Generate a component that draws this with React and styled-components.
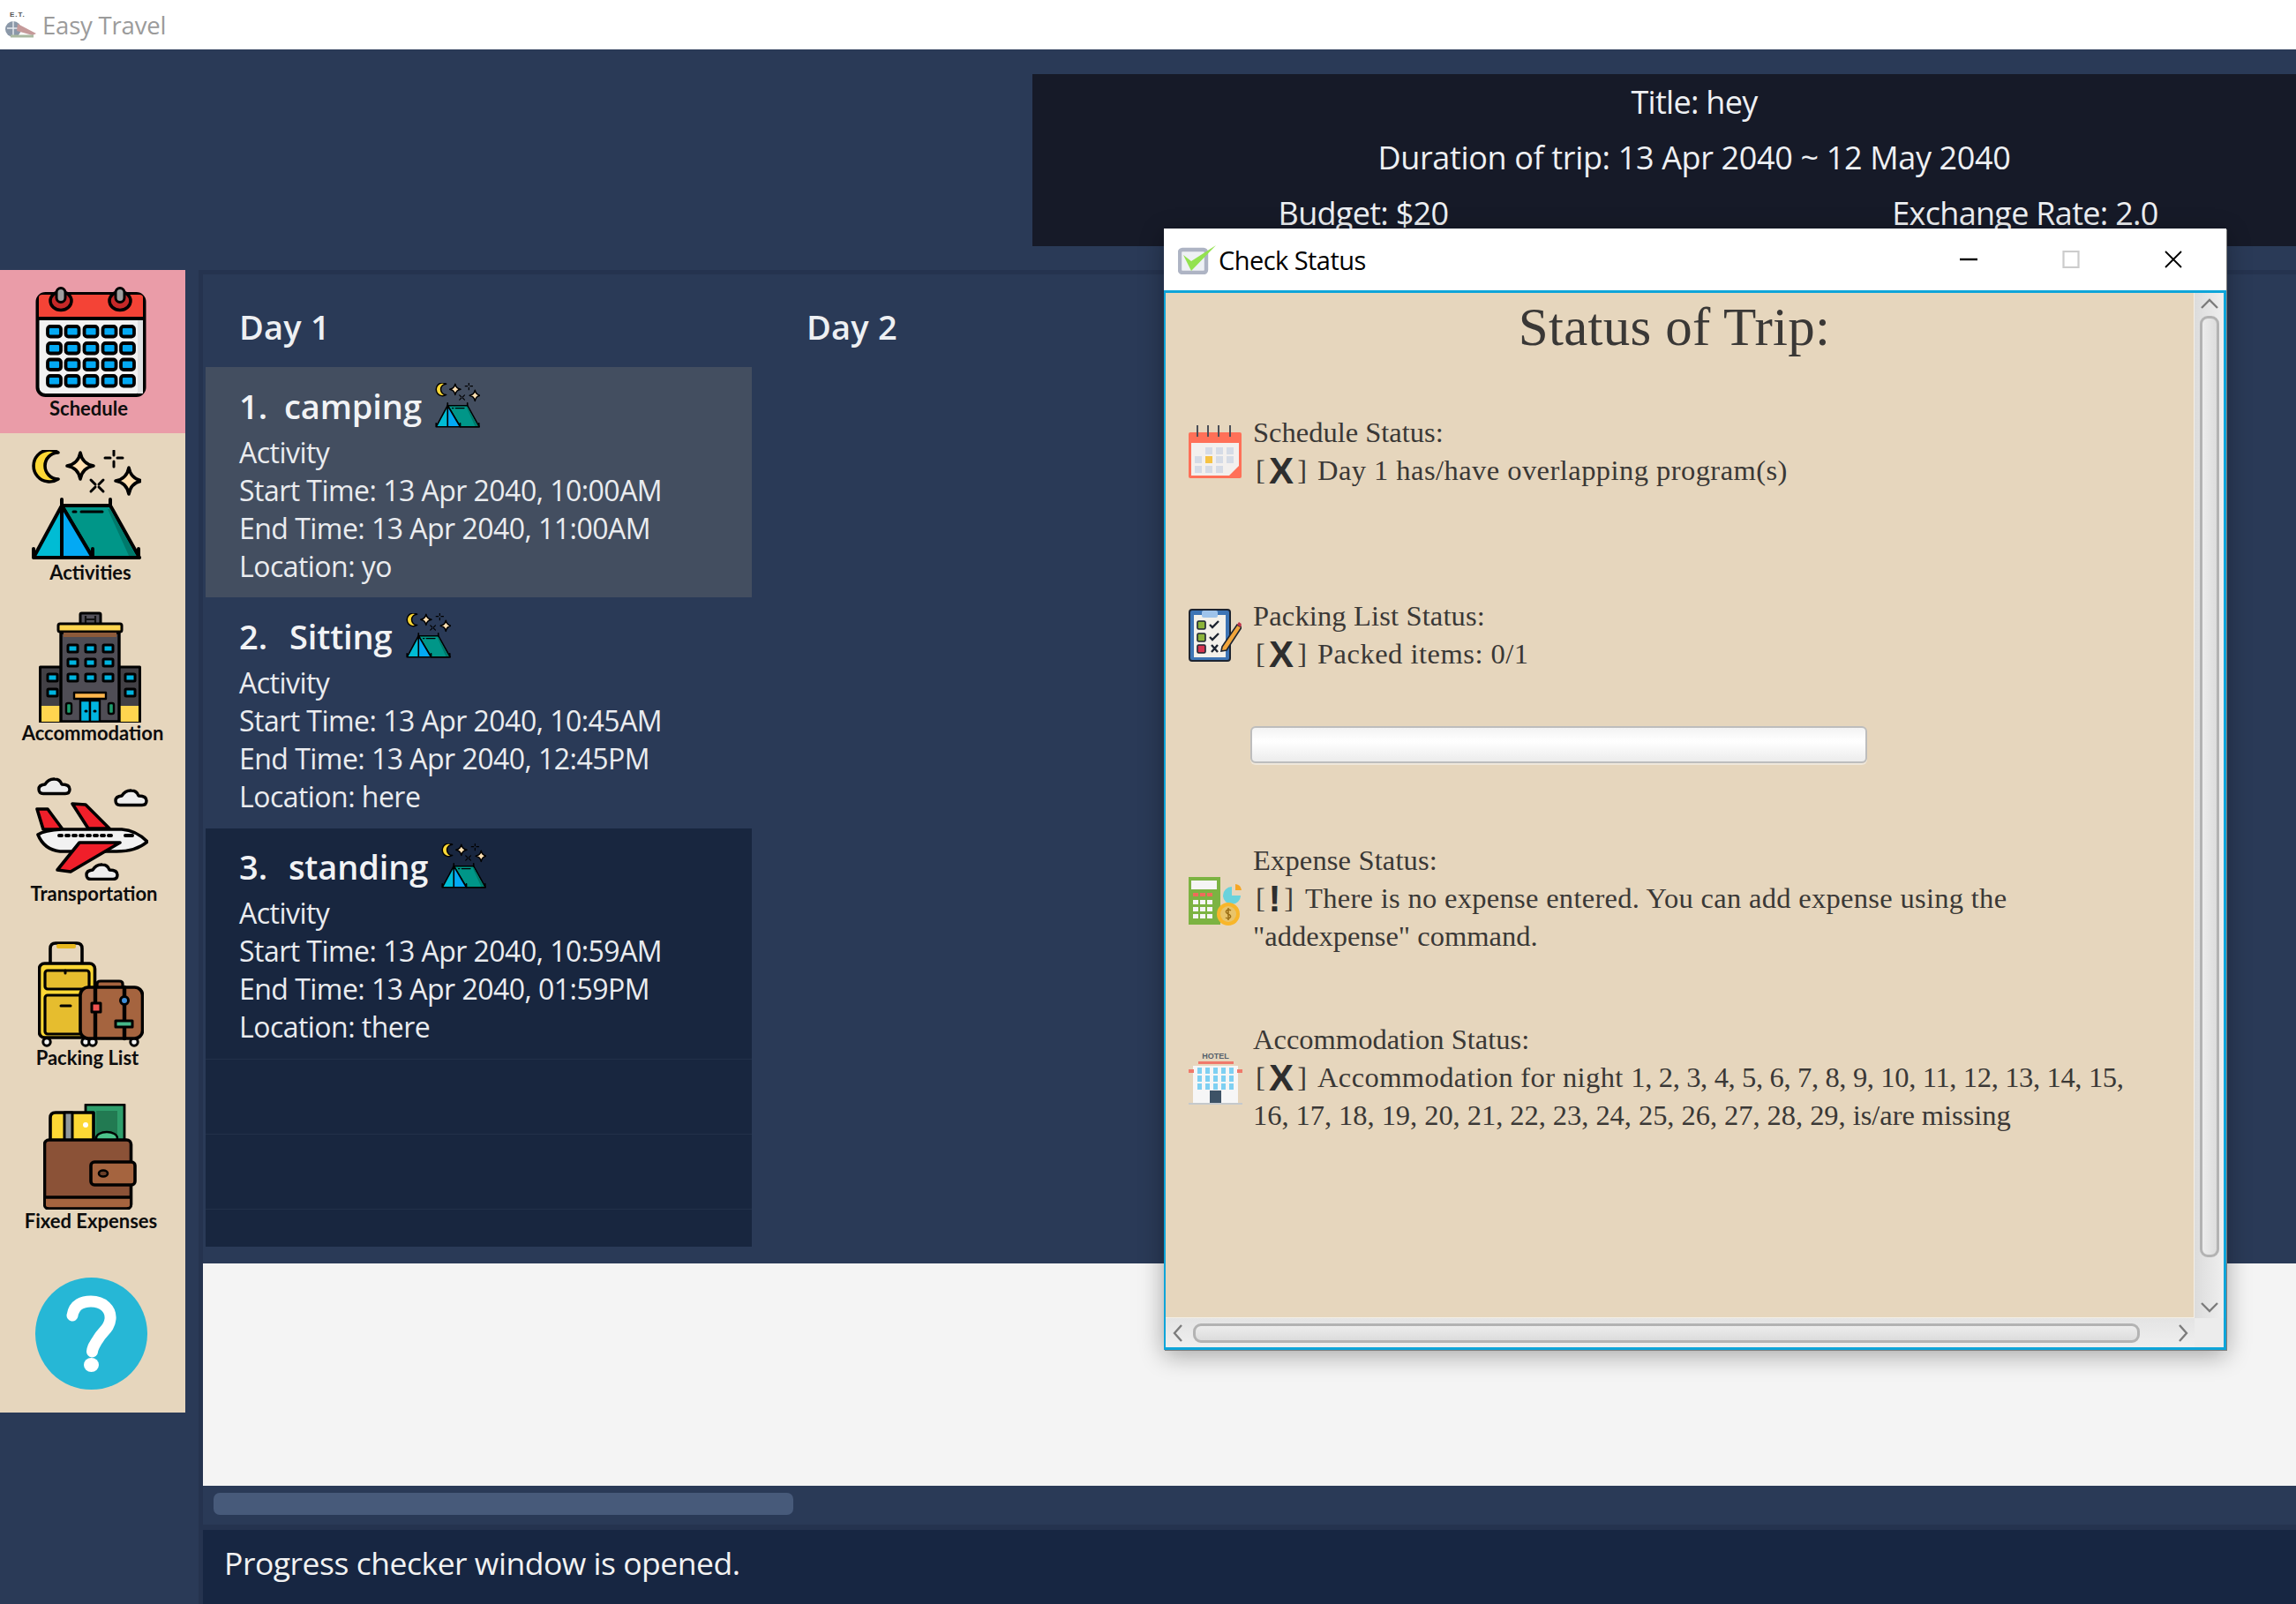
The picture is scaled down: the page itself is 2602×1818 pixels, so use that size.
import React from 'react';
import styled, { createGlobalStyle } from 'styled-components';

const Global = createGlobalStyle`
  html, body { margin: 0; padding: 0; background: #2a3a57; }
  * { box-sizing: border-box; }
`;
const UI = `"Open Sans", "Noto Sans", sans-serif`;
const LINE = '#25334f';

const Root = styled.div`
  position: relative; width: 2602px; height: 1818px; overflow: hidden;
  background: #2a3a57; display: flex; flex-direction: column; font-family: ${UI};
`;
const TitleBar = styled.header`
  height: 56px; background: #fff; display: flex; align-items: center; gap: 6px; padding: 0 0 0 4px;
  color: #9b9b9b; font-size: 27.5px; letter-spacing: -0.2px;
`;
const Body = styled.div`display: flex; flex: 1; min-height: 0;`;
const Sidebar = styled.nav`
  width: 210px; flex: none; padding-top: 250px; display: flex; flex-direction: column;
  align-self: flex-start;
`;
const NavItem = styled.div`
  height: 185px; display: flex; flex-direction: column; align-items: center;
  background: ${p => (p.$active ? '#ea9ca8' : '#e6d6bd')};
  padding-top: ${p => p.$top}px; padding-right: ${p => p.$right || 0}px;
`;
const NavLabel = styled.span`
  font-family: Lato, sans-serif; font-weight: 700; font-size: 22px; line-height: 24px; color: #0d0d0d;
  margin-top: ${p => p.$gap}px; margin-left: ${p => p.$shift || 0}px; white-space: nowrap;
`;
const Main = styled.main`flex: 1; min-width: 0; display: flex; flex-direction: column;`;
const HeaderZone = styled.div`height: 250px; padding: 28px 0 0 960px;`;
const TripPanel = styled.section`
  height: 195px; background: #161a28; overflow: hidden; color: #eef0f3; font-size: 36px;
`;
const TripInner = styled.div`width: 1500px;`;
const TripLine = styled.div`
  height: 63px; line-height: 63px; text-align: center; letter-spacing: ${p => p.$ls || -0.7}px;
`;
const TripPair = styled.div`display: grid; grid-template-columns: 750px 750px;`;
const Lower = styled.div`
  flex: 1; min-height: 0; margin-left: 15px; display: flex; flex-direction: column;
  border-left: 5px solid ${LINE};
`;
const Schedule = styled.section`
  height: 1126px; border-top: 5px solid ${LINE}; padding-left: 3px; display: flex; gap: 24px;
`;
const DayCol = styled.div`width: 619px; flex: none; display: flex; flex-direction: column;`;
const DayTitle = styled.h2`
  margin: 0; height: 105px; padding: 38px 0 0 38px; font-size: 38px; line-height: 42px; font-weight: 600; color: #eef0f3;
  letter-spacing: 0.2px;
`;
const Card = styled.article`
  height: ${p => p.$h}px; padding: ${p => p.$pad}px 0 0 38px; color: #eaecef;
  background: ${p => (p.$sel ? '#434e60' : p.$dark ? '#18263f' : 'transparent')};
`;
const CardHead = styled.div`
  height: 51px; display: flex; align-items: center; font-size: 38px; font-weight: 600; color: #f2f3f5; letter-spacing: -0.1px;
`;
const CardNum = styled.span`margin-right: ${p => p.$gap}px;`;
const CardName = styled.span`margin-right: 15px;`;
const CardLines = styled.div`margin-top: 6px; font-size: 32px; line-height: 43px; letter-spacing: -0.53px; white-space: nowrap;`;
const EmptyRow = styled.div`
  height: ${p => p.$h}px; background: #18263f; border-top: 1px solid #223049;
`;
const CommandZone = styled.div`height: 252px; background: #f4f4f4;`;
const ScrollZone = styled.div`height: 44px; padding: 8px 0 0 12px;`;
const HThumb = styled.div`width: 657px; height: 25px; border-radius: 7px; background: #475a7a;`;
const StatusBar = styled.footer`
  flex: 1; border-top: 6px solid ${LINE}; background: #172642; color: #f2f2f2; padding: 13px 0 0 24px;
  font-size: 35.5px; line-height: 48px; letter-spacing: -0.48px;
`;

/* Floating window */
const Win = styled.aside`
  position: absolute; left: 1319px; top: 259px; width: 1204px; height: 1271px;
  display: flex; flex-direction: column; background: #fff;
  box-shadow: 1px 1px 0 #7d7d7d, 0 6px 26px rgba(0,0,0,.33);
`;
const WinBar = styled.div`
  height: 70px; flex: none; display: flex; align-items: center; padding: 0 50px 0 16px; color: #000;
  font-size: 29px; letter-spacing: -0.55px;
`;
const WinTitle = styled.span`margin-left: 3px; flex: 1;`;
const WinControls = styled.div`display: flex; align-items: center; gap: 96px;`;
const Frame = styled.div`
  flex: 1; min-height: 0; border: solid #0ea5d9; border-width: 3px 3px 3px 2px;
  display: grid; grid-template-columns: 1fr 33px; grid-template-rows: 1fr 33px; background: #ececec;
`;
const Content = styled.div`
  background: #e6d6bd; padding: 9px 0 0 26px; display: flex; flex-direction: column; color: #3a3836;
  font-family: "Liberation Serif", serif; font-size: 32.5px; line-height: 43px;
  border-right: 1px solid #f4efe6; border-bottom: 1px solid #f4efe6; overflow: hidden;
`;
const StatusTitle = styled.h1`
  margin: 0; height: 60px; padding-right: 38px; text-align: center; font-weight: 400; font-size: 61px; line-height: 60px; color: #3a3836;
  letter-spacing: 0.3px;
`;
const Row = styled.div`
  display: grid; grid-template-columns: 60px 1fr; column-gap: 13px; align-items: center; margin-top: ${p => p.$mt}px; flex: none;
`;
const RowText = styled.div`white-space: nowrap;`;
const Spaced = styled.span`letter-spacing: ${p => p.$ls}px;`;
const Mark = styled.span`
  display: inline-flex; align-items: center; width: ${p => p.$w}px; margin: 0 ${p => p.$after}px 0 3px; justify-content: space-between;
  vertical-align: baseline;
`;
const MarkGlyph = styled.b`
  font-family: "Liberation Sans", sans-serif; font-weight: 700; font-size: 42px; line-height: 30px; color: #2e2e2e;
`;
const Progress = styled.div`
  width: 699px; height: 42px; margin: 60px 0 0 70px; flex: none; border: 2px solid #bdbdbd; border-radius: 6px;
  background: linear-gradient(#f3f3f3, #fff 40%, #ececec); box-shadow: 0 2px 0 #efe7db;
`;
const VTrack = styled.div`
  background: linear-gradient(90deg, #dcdcdc, #efefef); display: flex; flex-direction: column; align-items: center;
`;
const HTrack = styled.div`
  background: linear-gradient(#e4e4e4, #efefef); display: flex; align-items: center; padding-left: 34px;
`;
const Corner = styled.div`background: #ececec;`;
const VThumb = styled.div`
  width: 22px; height: 1067px; flex: none; border: 3px solid #b3b3b3; border-radius: 9px;
  background: linear-gradient(90deg, #ededed, #dcdcdc);
`;
const HBar = styled.div`
  width: 1073px; height: 22px; flex: none; border: 3px solid #b3b3b3; border-radius: 9px;
  background: linear-gradient(#ededed, #dcdcdc);
`;
const ArrowV = styled.svg`flex: none; display: block; margin: ${p => p.$m};`;
const ArrowH = styled.svg`flex: none; display: block; margin: ${p => p.$m};`;
const Ico = styled.svg`display: block; flex: none;`;

const S = { stroke: '#000', strokeLinejoin: 'round', strokeLinecap: 'round' };

const Star = ({ x, y, r }) => (
  <path d={`M${x} ${y - r}Q${x + r * .15} ${y - r * .15} ${x + r} ${y}Q${x + r * .15} ${y + r * .15} ${x} ${y + r}Q${x - r * .15} ${y + r * .15} ${x - r} ${y}Q${x - r * .15} ${y - r * .15} ${x} ${y - r}Z`} fill="#ffe0b2" {...S} strokeWidth="3.6" />
);

const TentIcon = ({ size = 125 }) => (
  <Ico width={size} height={size} viewBox="0 0 125 125">
    <path d="M31 3A18 18 0 1 0 31 33A14 14 0 0 1 31 3Z" fill="#fdd835" {...S} strokeWidth="3.6" />
    <Star x={56} y={18} r={15} />
    <Star x={111} y={35} r={15} />
    <g {...S} strokeWidth="3" fill="none">
      <path d="M94 1v5M94 13v6M84 9h6M98 9h6" />
      <path d="M68 34l5 5M82 34l-5 5M68 47l5-5M82 47l-5-5" />
    </g>
    <path d="M35 63H90L123 122H70Z" fill="#009688" {...S} strokeWidth="4" />
    <path d="M112 122L87 67h3l30 55Z" fill="#00796b" />
    <path d="M35 63L3 122H35Z" fill="#00bcd4" />
    <path d="M35 63L70 122H35Z" fill="#03a9f4" />
    <path d="M35 56V122M35 63L3 122H122M35 63L70 122M90 56V63M3 112V122M122 112V122M70 112V122" fill="none" {...S} strokeWidth="4" />
    <path d="M48 70h3M57 70h24" {...S} strokeWidth="3" />
  </Ico>
);

const CalendarIcon = () => {
  const xs = [13, 33.5, 54.5, 75.5, 96];
  const ys = [44, 63, 81.5, 100];
  return (
    <Ico width="126" height="125" viewBox="0 0 126 125">
      <rect x="2.5" y="8" width="121" height="115" rx="9" fill="#f2f2f2" {...S} strokeWidth="4" />
      <path d="M4 35V12q0-3 4-3H118q4 0 4 3V35Z" fill="#f44336" />
      <rect x="116" y="36" width="6" height="85" fill="#dfe1e3" />
      <path d="M3 36H123" {...S} strokeWidth="4" />
      {[29, 96].map(x => (
        <g key={x}>
          <ellipse cx={x} cy="16" rx="12" ry="10.5" fill="#c62828" {...S} strokeWidth="3.5" />
          <rect x={x - 5} y="1.5" width="10" height="16" rx="5" fill="#9e9e9e" {...S} strokeWidth="3" />
        </g>
      ))}
      {ys.map(y => xs.map(x => (
        <rect key={`${x}-${y}`} x={x + 1} y={y + 1} width="15" height="11.5" rx="3" fill="#03a9f4" {...S} strokeWidth="3.8" />
      )))}
    </Ico>
  );
};

const HotelIcon = () => {
  const win = (x, y) => <rect key={`${x}-${y}`} x={x + 1} y={y} width="11" height="8" rx="1" fill="#00b4e0" {...S} strokeWidth="3" />;
  return (
    <Ico width="116" height="126" viewBox="0 0 116 126">
      <rect x="47" y="2" width="23" height="14" rx="1.5" fill="#55525a" {...S} strokeWidth="3" />
      <path d="M53 5v8M64 5v8M53 9h11" stroke="#111" strokeWidth="2.2" fill="none" />
      <rect x="1.5" y="63" width="24" height="62" fill="#424045" {...S} strokeWidth="3" />
      <rect x="90" y="63" width="24.5" height="62" fill="#424045" {...S} strokeWidth="3" />
      <rect x="3" y="107" width="22" height="18" fill="#ffd54f" />
      <rect x="91" y="107" width="22" height="18" fill="#ffd54f" />
      <rect x="25" y="24" width="66" height="101" fill="#4f4d55" {...S} strokeWidth="3.4" />
      <rect x="22" y="14" width="72" height="9" rx="2" fill="#ffd54f" {...S} strokeWidth="3" />
      <rect x="28" y="24" width="60" height="5" fill="#8d5a3a" />
      {[32, 52, 72].flatMap(x => [38, 54, 71].map(y => win(x, y)))}
      {[9, 97].flatMap(x => [71, 88].map(y => win(x, y)))}
      <rect x="40" y="92" width="36" height="7" fill="#ffb74d" {...S} strokeWidth="2.4" />
      <rect x="47" y="101" width="11" height="24" fill="#00b4e0" {...S} strokeWidth="2.4" />
      <rect x="58" y="101" width="11" height="24" fill="#00b4e0" {...S} strokeWidth="2.4" />
      <rect x="31" y="104" width="6" height="12" rx="2" fill="#1e9e6e" {...S} strokeWidth="2.4" />
      <rect x="79" y="104" width="6" height="12" rx="2" fill="#1e9e6e" {...S} strokeWidth="2.4" />
      <path d="M53 113h1M63 113h1" {...S} strokeWidth="3" />
    </Ico>
  );
};

const Cloud = ({ x, y }) => (
  <path transform={`translate(${x} ${y})`} d="M7 18.5Q2 18.5 2 13.5Q2 8.5 9 8Q13 1.5 20 2Q26 2 28 8Q37 8 37 13.5Q37 18.5 32 18.5Z" fill="#eee" {...S} strokeWidth="3.4" />
);

const PlaneIcon = () => (
  <Ico width="128" height="117" viewBox="0 0 128 117">
    <Cloud x={2} y={0} />
    <Cloud x={89} y={13} />
    <Cloud x={56} y={97} />
    <path d="M2 36H14L31 59H9Z" fill="#f01f2a" {...S} strokeWidth="3.6" />
    <path d="M42 30L57 31L84 58H60Z" fill="#f01f2a" {...S} strokeWidth="3.6" />
    <path d="M3 65Q10 60 30 59H98Q114 60 127 73Q114 84 92 84H28Q10 82 3 65Z" fill="#f2f2f2" {...S} strokeWidth="3.6" />
    <path d="M50 74L96 74L40 107L25 105Z" fill="#f01f2a" {...S} strokeWidth="3.6" />
    <path d="M27 66h3M35 66h3M43 66h3M51 66h3M59 66h3M67 66h3M75 66h3M83 66h3M102 66h8" {...S} strokeWidth="4" />
  </Ico>
);

const LuggageIcon = () => (
  <Ico width="120" height="120" viewBox="0 0 120 120">
    <path d="M14 25V8Q14 2 20 2H44Q50 2 50 8V25" fill="none" {...S} strokeWidth="3.6" />
    <rect x="21" y="3" width="22" height="5" rx="2" fill="#e8b81e" />
    <rect x="1.5" y="25" width="63" height="84" rx="6" fill="#fdd835" {...S} strokeWidth="3.6" />
    <rect x="8" y="33" width="50" height="21" rx="3" fill="#e6bd2e" {...S} strokeWidth="3.2" />
    <rect x="8" y="61" width="50" height="44" rx="3" fill="#e6bd2e" {...S} strokeWidth="3.2" />
    <path d="M31 33v3M26 73h11" {...S} strokeWidth="3" />
    {[10, 54, 62, 109].map(x => <circle key={x} cx={x} cy="114" r="4.2" fill="#f4f4f4" {...S} strokeWidth="3" />)}
    <path d="M67 52V48Q67 45 71 45H92Q96 45 96 48V52" fill="#a5643f" {...S} strokeWidth="3.2" />
    <rect x="48" y="52" width="70.5" height="58" rx="9" fill="#a5643f" {...S} strokeWidth="3.6" />
    <path d="M65 52V110M98 52V110" {...S} strokeWidth="4.4" fill="none" />
    <rect x="61" y="70" width="10" height="10" fill="#ef5350" {...S} strokeWidth="3" />
    <circle cx="98" cy="67" r="4.5" fill="#3f8ed8" {...S} strokeWidth="3" />
    <rect x="88" y="90" width="19" height="7" fill="#46b88a" {...S} strokeWidth="3" />
  </Ico>
);

const WalletIcon = () => (
  <Ico width="106" height="120" viewBox="0 0 106 120">
    <rect x="48" y="1" width="44" height="44" fill="#2e9e6b" {...S} strokeWidth="2.8" />
    <rect x="60" y="8" width="24" height="36" fill="#227a52" />
    <ellipse cx="72" cy="39" rx="12" ry="7" fill="#4cc38a" {...S} strokeWidth="2.4" />
    <path d="M8 44V16Q8 10 14 10H57V44Z" fill="#fdd835" {...S} strokeWidth="3.6" />
    <rect x="24" y="10" width="9" height="34" fill="#8f979b" {...S} strokeWidth="3" />
    <path d="M45 24a3 3 0 0 1 6 0a3 3 0 0 1-6 0" fill="#fff" />
    <rect x="1.5" y="41" width="98" height="78" rx="5" fill="#8b5237" {...S} strokeWidth="3.6" />
    <path d="M3 107H98V115Q98 117 96 117H5Q3 117 3 115Z" fill="#a5643f" />
    <path d="M2 106H99" {...S} strokeWidth="3.4" />
    <rect x="54" y="66" width="50" height="26" rx="4" fill="#a5643f" {...S} strokeWidth="3.6" />
    <ellipse cx="68" cy="79" rx="5" ry="3.5" fill="#6b3f28" {...S} strokeWidth="2.6" />
  </Ico>
);

const HelpIcon = () => (
  <Ico width="127" height="127" viewBox="0 0 127 127">
    <circle cx="63.5" cy="63.5" r="63.5" fill="#26b7d6" />
    <path d="M42 43C44 30 54 27 63 27C77 27 86 36 85 47C84 58 76 61 71 70C67 76 65 79 64.5 84" fill="none" stroke="#fff" strokeWidth="13" strokeLinecap="round" />
    <ellipse cx="63.5" cy="99" rx="8.5" ry="8" fill="#fff" />
  </Ico>
);

const LogoIcon = () => (
  <Ico width="38" height="38" viewBox="0 0 38 38">
    <text x="7" y="10" fontFamily="Liberation Sans, sans-serif" fontSize="8" fontWeight="700" fill="#555" letterSpacing="1">E.T.</text>
    <circle cx="11" cy="24" r="9" fill="#8b98a8" />
    <path d="M4 23h14M11 15v18" stroke="#e7eaee" strokeWidth="1.4" />
    <path d="M16 18L37 29L33 31L15 26Z" fill="#c59a9a" />
    <path d="M8 32h26" stroke="#a9b8a0" strokeWidth="3" />
  </Ico>
);

const CheckIcon = () => (
  <Ico width="43" height="33" viewBox="0 0 43 33">
    <rect x="2" y="5" width="30" height="26" rx="3" fill="#eef1f5" stroke="#aeb4c4" strokeWidth="4.4" />
    <path d="M6 11L15 29L43 0L15 18Z" fill="#93e24f" />
  </Ico>
);

const MinIcon = () => <Ico width="20" height="20" viewBox="0 0 20 20"><path d="M0 10H20" stroke="#000" strokeWidth="2.4" /></Ico>;
const MaxIcon = () => <Ico width="20" height="20" viewBox="0 0 20 20"><rect x="1.5" y="1" width="17" height="18" fill="none" stroke="#ccc" strokeWidth="2.2" /></Ico>;
const CloseIcon = () => <Ico width="20" height="20" viewBox="0 0 20 20"><path d="M1 1L19 19M19 1L1 19" stroke="#000" strokeWidth="1.8" /></Ico>;

const FlatCalendar = () => (
  <Ico width="60" height="60" viewBox="0 0 60 60">
    <rect x="0" y="8" width="60" height="52" rx="2" fill="#ff7058" />
    <rect x="3" y="20" width="54" height="37" fill="#f3f0ee" />
    <path d="M57 46V57H46Z" fill="#ff7058" />
    <path d="M10 0v13M22 0v13M34 0v13M47 0v13" stroke="#4b4f58" strokeWidth="2" />
    {[[19, 25], [31, 25], [43, 25], [7, 35], [31, 35], [43, 35], [7, 46], [19, 46], [31, 46]].map(([x, y]) => (
      <rect key={`${x}-${y}`} x={x} y={y} width="8" height="8" fill="#d5dbe6" />
    ))}
    <rect x="19" y="35" width="8" height="8" fill="#f6c344" />
  </Ico>
);

const FlatClipboard = () => (
  <Ico width="60" height="60" viewBox="0 0 60 60">
    <rect x="1" y="1" width="46" height="58" rx="3" fill="#3e75b5" stroke="#1d2430" strokeWidth="2" />
    <rect x="6" y="7" width="36" height="48" fill="#f4f1ea" />
    <rect x="15" y="2" width="18" height="8" rx="2" fill="#9ec3ea" />
    {[[10, 14, '#8cb43a'], [10, 28, '#8cb43a'], [10, 41, '#d6344f']].map(([x, y, c]) => (
      <rect key={y} x={x} y={y} width="9" height="9" rx="1.5" fill={c} stroke="#1d2430" strokeWidth="1.6" />
    ))}
    <path d="M24 18l3 3l7-7M24 32l3 3l7-7" fill="none" stroke="#1d2430" strokeWidth="2.4" />
    <path d="M26 41l7 8M33 41l-7 8" stroke="#1d2430" strokeWidth="2.4" />
    <path d="M38 43L55 18L60 21L43 47L37 48Z" fill="#f0a53c" stroke="#1d2430" strokeWidth="1.6" />
    <path d="M55 18L57 15Q59 16 60 18L59 21Z" fill="#c0344a" />
  </Ico>
);

const FlatCalculator = () => (
  <Ico width="61" height="62" viewBox="0 -6 61 62">
    <rect x="0" y="0" width="36" height="54" fill="#7cb342" />
    <rect x="3" y="4" width="29" height="10" fill="#f5f5f5" />
    {[5, 13, 21].map(x => <rect key={x} x={x} y="18" width="6" height="4" fill="#ef6c5a" />)}
    {[5, 13, 21].flatMap(x => [26, 34, 42].map(y => <rect key={`${x}-${y}`} x={x} y={y} width="6" height="5" fill="#f5f5f5" />))}
    <path d="M49 11A10 10 0 1 0 59 21H49Z" fill="#69d2dc" />
    <path d="M53 8A8 8 0 0 1 60 15L53 15Z" fill="#f6a623" />
    <circle cx="45" cy="42" r="13" fill="#f8b62a" />
    <circle cx="45" cy="42" r="9" fill="#e9c46a" />
    <path d="M45 35v14M48 38q-3-2-5 0t2 4t2 4t-5 0" fill="none" stroke="#9a6d14" strokeWidth="1.5" />
  </Ico>
);

const FlatHotel = () => (
  <Ico width="61" height="60" viewBox="0 0 61 60">
    <text x="30.5" y="8" textAnchor="middle" fontFamily="Liberation Sans, sans-serif" fontSize="9" fontWeight="700" fill="#56606b">HOTEL</text>
    <rect x="11" y="11" width="40" height="3" fill="#f0796b" />
    <rect x="5" y="16" width="51" height="44" fill="#f6f6f6" />
    <path d="M0 20H6V24H0ZM55 20H61V24H55Z" fill="#f0796b" />
    {[10, 19, 28, 37, 46].flatMap(x => [18, 27, 36].map(y => <rect key={`${x}-${y}`} x={x} y={y} width="5" height="7" fill="#7ed0f2" />))}
    <rect x="24" y="44" width="13" height="16" fill="#3d5266" />
    <rect x="0" y="58" width="61" height="2" fill="#c5c9cc" />
  </Ico>
);

const Chevron = ({ d, w, h, m, as: Tag }) => (
  <Tag width={w} height={h} viewBox={`0 0 ${w} ${h}`} $m={m}>
    <path d={d} fill="none" stroke="#7c7c7c" strokeWidth="2.4" />
  </Tag>
);

const X = ({ glyph = 'X', w = 58, after = 12 }) => (
  <Mark $w={w} $after={after}><span>[</span><MarkGlyph>{glyph}</MarkGlyph><span>]</span></Mark>
);

const nav = [
  { label: 'Schedule', icon: <CalendarIcon />, top: 19, gap: 1, active: true, shift: -5, right: 4 },
  { label: 'Activities', icon: <TentIcon />, top: 19, gap: 2, shift: 11, right: 16 },
  { label: 'Accommodation', icon: <HotelIcon />, top: 17, gap: 0, shift: 6, right: 6 },
  { label: 'Transportation', icon: <PlaneIcon />, top: 20, gap: 3, shift: 6, right: 3 },
  { label: 'Packing List', icon: <LuggageIcon />, top: 21, gap: 0, shift: -8, right: 4 },
  { label: 'Fixed Expenses', icon: <WalletIcon />, top: 20, gap: 1, shift: 2, right: 6 },
];

const cards = [
  { n: '1.', gap: 19, name: 'camping', lines: ['Activity', 'Start Time: 13 Apr 2040, 10:00AM', 'End Time: 13 Apr 2040, 11:00AM', 'Location: yo'], h: 261, pad: 18, sel: true },
  { n: '2.', gap: 25, name: 'Sitting', lines: ['Activity', 'Start Time: 13 Apr 2040, 10:45AM', 'End Time: 13 Apr 2040, 12:45PM', 'Location: here'], h: 262, pad: 18 },
  { n: '3.', gap: 24, name: 'standing', lines: ['Activity', 'Start Time: 13 Apr 2040, 10:59AM', 'End Time: 13 Apr 2040, 01:59PM', 'Location: there'], h: 261, pad: 17, dark: true },
];

export default function App() {
  return (
    <Root>
      <Global />
      <TitleBar><LogoIcon />Easy Travel</TitleBar>
      <Body>
        <Sidebar>
          {nav.map(n => (
            <NavItem key={n.label} $active={n.active} $top={n.top} $right={n.right}>
              {n.icon}
              <NavLabel $gap={n.gap} $shift={n.shift}>{n.label}</NavLabel>
            </NavItem>
          ))}
          <NavItem $top={32} $right={4}><HelpIcon /></NavItem>
        </Sidebar>
        <Main>
          <HeaderZone>
            <TripPanel>
              <TripInner>
                <TripLine>Title: hey</TripLine>
                <TripLine $ls={-0.35}>Duration of trip: 13 Apr 2040 ~ 12 May 2040</TripLine>
                <TripPair>
                  <TripLine>Budget: $20</TripLine>
                  <TripLine>Exchange Rate: 2.0</TripLine>
                </TripPair>
              </TripInner>
            </TripPanel>
          </HeaderZone>
          <Lower>
            <Schedule>
              <DayCol>
                <DayTitle>Day 1</DayTitle>
                {cards.map(c => (
                  <Card key={c.n} $h={c.h} $pad={c.pad} $sel={c.sel} $dark={c.dark}>
                    <CardHead>
                      <CardNum $gap={c.gap}>{c.n}</CardNum>
                      <CardName>{c.name}</CardName>
                      <TentIcon size={51} />
                    </CardHead>
                    <CardLines>{c.lines.map(l => <div key={l}>{l}</div>)}</CardLines>
                  </Card>
                ))}
                <EmptyRow $h={85} />
                <EmptyRow $h={85} />
                <EmptyRow $h={43} />
              </DayCol>
              <DayCol><DayTitle>Day 2</DayTitle></DayCol>
            </Schedule>
            <CommandZone />
            <ScrollZone><HThumb /></ScrollZone>
            <StatusBar>Progress checker window is opened.</StatusBar>
          </Lower>
        </Main>
      </Body>

      <Win>
        <WinBar>
          <CheckIcon />
          <WinTitle>Check Status</WinTitle>
          <WinControls><MinIcon /><MaxIcon /><CloseIcon /></WinControls>
        </WinBar>
        <Frame>
          <Content>
            <StatusTitle>Status of Trip:</StatusTitle>
            <Row $mt={68}>
              <FlatCalendar />
              <RowText>Schedule Status:<br /><X /><Spaced $ls={0.45}>Day 1 has/have overlapping program(s)</Spaced></RowText>
            </Row>
            <Row $mt={122}>
              <FlatClipboard />
              <RowText><Spaced $ls={0.15}>Packing List Status:</Spaced><br /><X /><Spaced $ls={0.5}>Packed items: 0/1</Spaced></RowText>
            </Row>
            <Progress />
            <Row $mt={89}>
              <FlatCalculator />
              <RowText><Spaced $ls={0.15}>Expense Status:</Spaced><br /><X glyph="!" w={43} after={13} /><Spaced $ls={0.3}>There is no expense entered. You can add expense using the</Spaced><br />"addexpense" command.</RowText>
            </Row>
            <Row $mt={74}>
              <FlatHotel />
              <RowText>Accommodation Status:<br /><X /><Spaced $ls={0.4}>Accommodation for night </Spaced><Spaced $ls={-0.35}>1, 2, 3, 4, 5, 6, 7, 8, 9, 10, 11, 12, 13, 14, 15,</Spaced><br /><Spaced $ls={-0.05}>16, 17, 18, 19, 20, 21, 22, 23, 24, 25, 26, 27, 28, 29, is/are missing</Spaced></RowText>
            </Row>
          </Content>
          <VTrack>
            <Chevron as={ArrowV} w={20} h={12} m="6px 0 8px" d="M1 11L10 2L19 11" />
            <VThumb />
            <Chevron as={ArrowV} w={20} h={12} m="51px 0 0" d="M1 1L10 10L19 1" />
          </VTrack>
          <HTrack>
            <Chevron as={ArrowH} w={11} h={20} m="0 12px 0 -26px" d="M10 1L2 10L10 19" />
            <HBar />
            <Chevron as={ArrowH} w={11} h={20} m="0 0 0 44px" d="M1 1L9 10L1 19" />
          </HTrack>
          <Corner />
        </Frame>
      </Win>
    </Root>
  );
}
